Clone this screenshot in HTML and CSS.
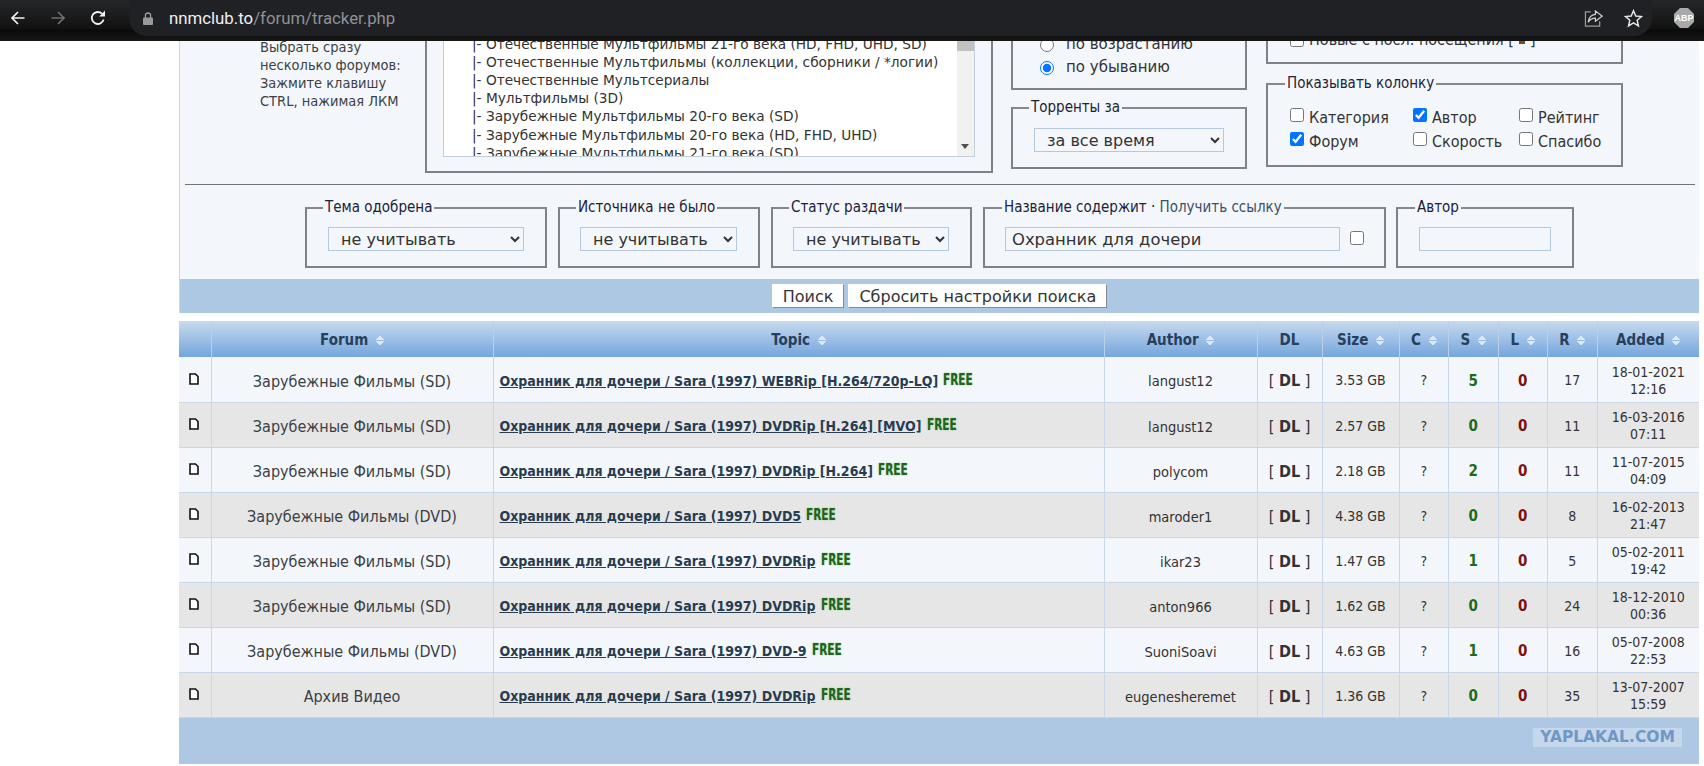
FILE: index.html
```html
<!DOCTYPE html>
<html>
<head>
  <title>Tracker</title>
  <link rel="stylesheet" href="styles.css">
</head>
<body>

  <header class="browser-bar">
    <svg class="nav-icon" viewBox="0 0 16 16"><path d="M14.5 8H2M8 2L2 8l6 6" fill="none" stroke="#f2f2f2" stroke-width="1.7"/></svg>
    <svg class="nav-icon" viewBox="0 0 16 16"><path d="M1.5 8H14M8 2l6 6-6 6" fill="none" stroke="#6f6f6f" stroke-width="1.7"/></svg>
    <svg class="nav-icon" viewBox="0 0 16 16"><path d="M13.6 9.5A6 6 0 1 1 12 3.7" fill="none" stroke="#f2f2f2" stroke-width="1.8"/><path d="M9.2 6.4H15V.6z" fill="#f2f2f2"/></svg>
    <div class="omnibox">
      <svg class="lock" viewBox="0 0 10 13"><path d="M2.4 6V3.6a2.6 2.6 0 0 1 5.2 0V6" fill="none" stroke="#999" stroke-width="1.3"/><rect y="5.4" width="10" height="7.6" rx="1" fill="#999"/></svg>
      <span class="url"><b>nnmclub.to</b>/forum/tracker.php</span>
      <svg class="omni-icon share" viewBox="0 0 20 20"><path d="M7 3H1.5v15h15v-5" fill="none" stroke="#9a9a9a" stroke-width="1.3"/><path d="M12 2l7 5.5-7 5.5V9.6C8 9.6 6 11 4.5 14c.5-5 3-8 7.5-8.4z" fill="none" stroke="#d0d0d0" stroke-width="1.3"/></svg>
      <svg class="omni-icon star" viewBox="0 0 20 20"><path d="M10 1.8l2.4 5.5 6 .6-4.5 4 1.3 5.9L10 14.7l-5.2 3.1 1.3-5.9-4.5-4 6-.6z" fill="none" stroke="#e4e4e4" stroke-width="1.6"/></svg>
    </div>
    <div class="abp">ABP</div>
  </header>

  <main class="content">
    <section class="panel">

      <div class="top-filters">
        <div class="hint">Выбрать сразу<br>несколько форумов:<br>Зажмите клавишу<br>CTRL, нажимая ЛКМ</div>

        <fieldset class="box forums">
          <div class="listbox">
            <div class="list-lines">
              <div>|- Отечественные Мультфильмы 21-го века (HD, FHD, UHD, SD)</div>
              <div>|- Отечественные Мультфильмы (коллекции, сборники / *логии)</div>
              <div>|- Отечественные Мультсериалы</div>
              <div>|- Мультфильмы (3D)</div>
              <div>|- Зарубежные Мультфильмы 20-го века (SD)</div>
              <div>|- Зарубежные Мультфильмы 20-го века (HD, FHD, UHD)</div>
              <div>|- Зарубежные Мультфильмы 21-го века (SD)</div>
            </div>
            <div class="scrollbar"><span class="thumb"></span><span class="arrow"></span></div>
          </div>
        </fieldset>

        <div class="side-col sort-col">
          <fieldset class="box sort-box">
            <label class="opt"><input type="radio" name="order"> по возрастанию</label>
            <label class="opt"><input type="radio" name="order" checked> по убыванию</label>
          </fieldset>
          <fieldset class="box period-box">
            <legend>Торренты за</legend>
            <select class="field period"><option>за все время</option></select>
          </fieldset>
        </div>

        <div class="side-col show-col">
          <fieldset class="box new-box">
            <label class="opt"><input type="checkbox"> Новые с посл. посещения [<span class="new-mark"></span>]</label>
          </fieldset>
          <fieldset class="box columns-box">
            <legend>Показывать колонку</legend>
            <div class="column-grid">
              <label><input type="checkbox"> Категория</label>
              <label><input type="checkbox" checked> Автор</label>
              <label><input type="checkbox"> Рейтинг</label>
              <label><input type="checkbox" checked> Форум</label>
              <label><input type="checkbox"> Скорость</label>
              <label><input type="checkbox"> Спасибо</label>
            </div>
          </fieldset>
        </div>
      </div>

      <hr class="divider">

      <div class="bottom-filters">
        <fieldset class="box w-approved">
          <legend>Тема одобрена</legend>
          <select class="field"><option>не учитывать</option></select>
        </fieldset>
        <fieldset class="box w-source">
          <legend>Источника не было</legend>
          <select class="field"><option>не учитывать</option></select>
        </fieldset>
        <fieldset class="box w-status">
          <legend>Статус раздачи</legend>
          <select class="field"><option>не учитывать</option></select>
        </fieldset>
        <fieldset class="box w-title">
          <legend>Название содержит · <span class="get-link">Получить ссылку</span></legend>
          <div class="title-line">
            <input class="field title-input" type="text" value="Охранник для дочери">
            <input type="checkbox">
          </div>
        </fieldset>
        <fieldset class="box w-author">
          <legend>Автор</legend>
          <input class="field author-input" type="text">
        </fieldset>
      </div>

      <div class="search-bar">
        <button class="btn">Поиск</button>
        <button class="btn">Сбросить настройки поиска</button>
      </div>
    </section>

    <table class="results" id="results">
      <colgroup>
        <col class="c-icon"><col class="c-forum"><col class="c-topic"><col class="c-author"><col class="c-dl"><col class="c-size">
        <col class="c-num"><col class="c-num"><col class="c-num"><col class="c-num"><col class="c-added">
      </colgroup>
      <thead>
        <tr>
          <th></th>
          <th>Forum <i class="sort"></i></th>
          <th>Topic <i class="sort"></i></th>
          <th>Author <i class="sort"></i></th>
          <th>DL</th>
          <th>Size <i class="sort"></i></th>
          <th>C <i class="sort"></i></th>
          <th>S <i class="sort"></i></th>
          <th>L <i class="sort"></i></th>
          <th>R <i class="sort"></i></th>
          <th>Added <i class="sort"></i></th>
        </tr>
      </thead>
      <tbody></tbody>
    </table>

    <div class="table-foot"><span class="watermark">YAPLAKAL.COM</span></div>
  </main>

  <script>
    var rows = [
      ["Зарубежные Фильмы (SD)", "Охранник для дочери / Sara (1997) WEBRip [H.264/720p-LQ]", "langust12", "3.53 GB", 5, 17, "18-01-2021", "12:16"],
      ["Зарубежные Фильмы (SD)", "Охранник для дочери / Sara (1997) DVDRip [H.264] [MVO]", "langust12", "2.57 GB", 0, 11, "16-03-2016", "07:11"],
      ["Зарубежные Фильмы (SD)", "Охранник для дочери / Sara (1997) DVDRip [H.264]", "polycom", "2.18 GB", 2, 11, "11-07-2015", "04:09"],
      ["Зарубежные Фильмы (DVD)", "Охранник для дочери / Sara (1997) DVD5", "maroder1", "4.38 GB", 0, 8, "16-02-2013", "21:47"],
      ["Зарубежные Фильмы (SD)", "Охранник для дочери / Sara (1997) DVDRip", "ikar23", "1.47 GB", 1, 5, "05-02-2011", "19:42"],
      ["Зарубежные Фильмы (SD)", "Охранник для дочери / Sara (1997) DVDRip", "anton966", "1.62 GB", 0, 24, "18-12-2010", "00:36"],
      ["Зарубежные Фильмы (DVD)", "Охранник для дочери / Sara (1997) DVD-9", "SuoniSoavi", "4.63 GB", 1, 16, "05-07-2008", "22:53"],
      ["Архив Видео", "Охранник для дочери / Sara (1997) DVDRip", "eugenesheremet", "1.36 GB", 0, 35, "13-07-2007", "15:59"]
    ];

    var doc = '<svg class="doc" viewBox="0 0 10 12"><path d="M1 1h5.5L9 3.5V11H1z" fill="#fff" stroke="#111" stroke-width="1.6"/></svg>';
    var html = "";
    rows.forEach(function(r) {
      html += '<tr>' +
        '<td>' + doc + '</td>' +
        '<td class="forum">' + r[0] + '</td>' +
        '<td class="topic"><a href="#">' + r[1] + '</a> <span class="free">FREE</span></td>' +
        '<td class="author">' + r[2] + '</td>' +
        '<td class="dl">[ <b>DL</b> ]</td>' +
        '<td class="small">' + r[3] + '</td>' +
        '<td class="small">?</td>' +
        '<td class="seed">' + r[4] + '</td>' +
        '<td class="leech">0</td>' +
        '<td class="small">' + r[5] + '</td>' +
        '<td class="small">' + r[6] + '<br>' + r[7] + '</td>' +
        '</tr>';
    });
    document.querySelector("#results tbody").innerHTML = html;
  </script>

</body>
</html>
```

FILE: styles.css
```css
body {
  margin: 0;
  background-color: #fff;
  font-family: "DejaVu Sans", sans-serif;
  font-stretch: condensed;
  font-size: 14.5px;
  color: #333;
  height: 766px;
  overflow: hidden;
}

/* browser chrome */
.browser-bar {
  height: 41px;
  background: linear-gradient(#262729 0, #111 29px, #0a0a0a 30px, #161616 100%);
  display: flex;
  align-items: flex-start;
  box-sizing: border-box;
}

.nav-icon {
  width: 16px;
  height: 16px;
  margin: 10px 0 0 10px;
  flex: none;
}

.nav-icon + .nav-icon {
  margin-left: 24px;
}

.omnibox {
  width: 1523px;
  height: 36px;
  margin-left: 23px;
  background-color: #202124;
  border-radius: 0 0 18px 18px;
  display: flex;
  align-items: center;
  flex: none;
}

.lock {
  width: 10px;
  height: 13px;
  margin-left: 14px;
}

.url {
  margin-left: 16px;
  font-family: Roboto, sans-serif;
  font-stretch: normal;
  font-size: 16.8px;
  color: #8f9194;
  flex: 1;
}

.url b {
  font-weight: normal;
  color: #f0f0f0;
}

.omni-icon {
  width: 19px;
  height: 19px;
}

.star {
  margin: 0 9px 0 21px;
}

.abp {
  width: 20px;
  height: 20px;
  margin: 8px 0 0 22px;
  background-color: #a9a9a9;
  clip-path: polygon(30% 0, 70% 0, 100% 30%, 100% 70%, 70% 100%, 30% 100%, 0 70%, 0 30%);
  color: #fff;
  font: bold 9px/20px "Liberation Sans", sans-serif;
  text-align: center;
}

/* page */
.content {
  margin-left: 179px;
  width: 1520px;
}

.panel {
  background-color: #f3f7fc;
  border-left: 1px solid #c9d8e8;
  box-sizing: border-box;
}

.box {
  margin: 0;
  padding: 0;
  border: 2px solid #7d8287;
  border-top-color: #85898e;
  min-width: 0;
  box-sizing: border-box;
  background: transparent;
}

legend {
  margin-left: -5px;
  padding: 0 2px;
  font-size: 15px;
  line-height: 17px;
  color: #1c2238;
}

.top-filters {
  height: 132px;
  display: flex;
  align-items: flex-end;
  overflow: hidden;
}

.hint {
  width: 165px;
  margin: 0 0 63px 80px;
  line-height: 18px;
  color: #3c3f44;
  flex: none;
}

.forums {
  width: 568px;
  height: 170px;
  padding: 0 16px 14px;
  display: flex;
  align-items: flex-end;
  flex: none;
}

.listbox {
  width: 100%;
  height: 150px;
  display: flex;
  border: 1px solid #c0cfdf;
  background-color: #fff;
  overflow: hidden;
}

.list-lines {
  align-self: flex-end;
  flex: 1;
  min-width: 0;
  padding: 0 0 0 28px;
  margin-bottom: -6px;
  font-size: 13.7px;
  font-stretch: normal;
  line-height: 18.2px;
  white-space: nowrap;
  overflow: hidden;
}

.scrollbar {
  width: 17px;
  background-color: #f1f1f1;
  position: relative;
  flex: none;
}

.thumb {
  position: absolute;
  left: 0;
  right: 0;
  top: 0;
  height: 45px;
  background-color: #c1c1c1;
}

.arrow {
  position: absolute;
  left: 4px;
  bottom: 7px;
  border: 4px solid transparent;
  border-top: 5px solid #505050;
  border-bottom: 0;
}

.side-col {
  display: flex;
  flex-direction: column;
  flex: none;
}

.sort-col {
  width: 236px;
  margin: 0 0 4px 18px;
  gap: 9px;
}

.show-col {
  width: 357px;
  margin: 0 0 6px 19px;
  gap: 11px;
}

.opt {
  display: flex;
  align-items: center;
  gap: 12px;
  font-size: 15px;
  font-stretch: normal;
  line-height: 23px;
  white-space: nowrap;
}

.sort-box {
  height: 70px;
  padding: 11px 0 0 27px;
}

.period-box {
  height: 70px;
  padding-left: 21px;
}

.period-box .field {
  margin-top: 12px;
}

.new-box {
  height: 60px;
  padding: 22px 0 0 22px;
}

.new-box .opt {
  gap: 5px;
  font-size: 16px;
  font-stretch: condensed;
}

.new-mark {
  display: inline-block;
  width: 6px;
  height: 8px;
  background-color: #7a4b22;
}

.opt input,
.column-grid input {
  width: 14px;
  height: 14px;
  margin: 0;
  flex: none;
}

.columns-box {
  height: 92px;
  padding: 14px 0 0 22px;
}

.column-grid {
  display: grid;
  grid-template-columns: 123px 106px auto;
  font-size: 16px;
  line-height: 24px;
}

.column-grid label {
  display: flex;
  align-items: flex-start;
  gap: 5px;
  white-space: nowrap;
}

.column-grid input {
  margin-top: 2px;
}

.divider {
  margin: 11px 4px 0 5px;
  border: 0;
  border-top: 1px solid #6f747a;
}

.bottom-filters {
  display: flex;
  gap: 11px;
  padding: 14px 0 11px 125px;
}

.bottom-filters .box {
  height: 69px;
  flex: none;
}

.bottom-filters legend {
  margin-left: -4px;
}

.w-approved { width: 242px; padding-left: 21px; }
.w-source { width: 202px; padding-left: 20px; }
.w-status { width: 201px; padding-left: 20px; }
.w-title { width: 403px; padding-left: 20px; }
.w-author { width: 178px; padding-left: 21px; margin-left: -1px; }

.bottom-filters .w-approved legend {
  margin-left: -5px;
}

.bottom-filters .w-title legend {
  margin-left: -3px;
}

.field {
  height: 24px;
  box-sizing: border-box;
  margin: 11px 0 0;
  border: 1px solid #b5c9de;
  border-radius: 0;
  background-color: #f3f7fc;
  font-family: "DejaVu Sans", sans-serif;
  font-stretch: normal;
  font-size: 16px;
  color: #333;
  padding: 0 0 0 8px;
  width: calc(100% - 21px);
}

.title-line {
  display: flex;
  align-items: flex-start;
  gap: 10px;
}

.title-line .title-input {
  width: 335px;
  padding-left: 6px;
  font-size: 16.4px;
  flex: none;
}

.title-line input[type="checkbox"] {
  width: 14px;
  height: 14px;
  margin: 15px 0 0;
}

.get-link {
  color: #3c4f66;
}

.search-bar {
  height: 34px;
  background-color: #adc8e3;
  display: flex;
  justify-content: center;
  align-items: center;
  gap: 4px;
}

.btn {
  height: 24px;
  padding: 0 10px;
  background-color: #fff;
  border: 1px solid #fff;
  border-right-color: #7f8b97;
  border-bottom-color: #7f8b97;
  font-family: "DejaVu Sans", sans-serif;
  font-stretch: normal;
  font-size: 16px;
  color: #333;
}

/* results */
.results {
  width: 1520px;
  margin-top: 8px;
  border-collapse: collapse;
  table-layout: fixed;
}

.c-icon { width: 32px; }
.c-forum { width: 282px; }
.c-topic { width: 611px; }
.c-author { width: 153px; }
.c-dl { width: 65px; }
.c-size { width: 77px; }
.c-num { width: 49.5px; }
.c-added { width: 102px; }

.results th {
  height: 35px;
  padding: 1px 0 0;
  background: linear-gradient(#c7daee, #74a5dd);
  border-right: 1px solid #b9d0e8;
  font-size: 15px;
  color: #27405c;
}

.results th:last-child,
.results td:last-child {
  border-right: 0;
}

.sort {
  display: inline-block;
  width: 8px;
  height: 11px;
  margin-left: 3px;
  vertical-align: -1px;
  background:
    linear-gradient(to top left, #dce8f5 50%, transparent 50%) 0 0 / 4px 5px no-repeat,
    linear-gradient(to top right, #dce8f5 50%, transparent 50%) 4px 0 / 4px 5px no-repeat,
    linear-gradient(to bottom left, #dce8f5 50%, transparent 50%) 0 6px / 4px 5px no-repeat,
    linear-gradient(to bottom right, #dce8f5 50%, transparent 50%) 4px 6px / 4px 5px no-repeat;
}

.results td {
  height: 45px;
  box-sizing: border-box;
  padding: 3px 0 0;
  border-right: 1px solid #c9d8e8;
  border-bottom: 1px solid #c9d8e8;
  text-align: center;
}

.results tbody tr:nth-child(odd) td {
  background-color: #f3f7fc;
}

.results tbody tr:nth-child(even) td {
  background-color: #e6e6e6;
}

.doc {
  width: 10px;
  height: 12px;
  display: block;
  margin: -4px 0 0 10px;
}

.results td.forum,
.results td.author {
  padding-top: 4px;
}

.forum {
  font-size: 16px;
  color: #3c3f44;
}

.results td.topic {
  padding-left: 6px;
  text-align: left;
}

.topic a {
  font-size: 14px;
  font-weight: bold;
  color: #283c50;
}

.free {
  display: inline-block;
  width: 29px;
  font: bold 16px/14px "DejaVu Sans", sans-serif;
  color: #226322;
  text-shadow: 0 0 2px #7fc46f;
  transform: scaleX(.66);
  transform-origin: 0 50%;
  vertical-align: 1px;
  margin-left: 1px;
}

.author {
  font-size: 14.5px;
}

.dl {
  font-size: 16px;
}

.small {
  font-size: 14px;
  line-height: 17px;
}

.seed {
  font-size: 15px;
  font-weight: bold;
  color: #1c6b1c;
}

.leech {
  font-size: 15px;
  font-weight: bold;
  color: #7d1010;
}

.table-foot {
  height: 46px;
  background-color: #aec8e3;
  display: flex;
  justify-content: flex-end;
  align-items: flex-start;
  padding: 10px 17px 0 0;
  box-sizing: border-box;
}

.watermark {
  width: 149px;
  height: 19px;
  background-color: #c5d7ea;
  color: #6f98c6;
  font: bold 15.5px/19px "DejaVu Sans", sans-serif;
  text-align: center;
}
```
